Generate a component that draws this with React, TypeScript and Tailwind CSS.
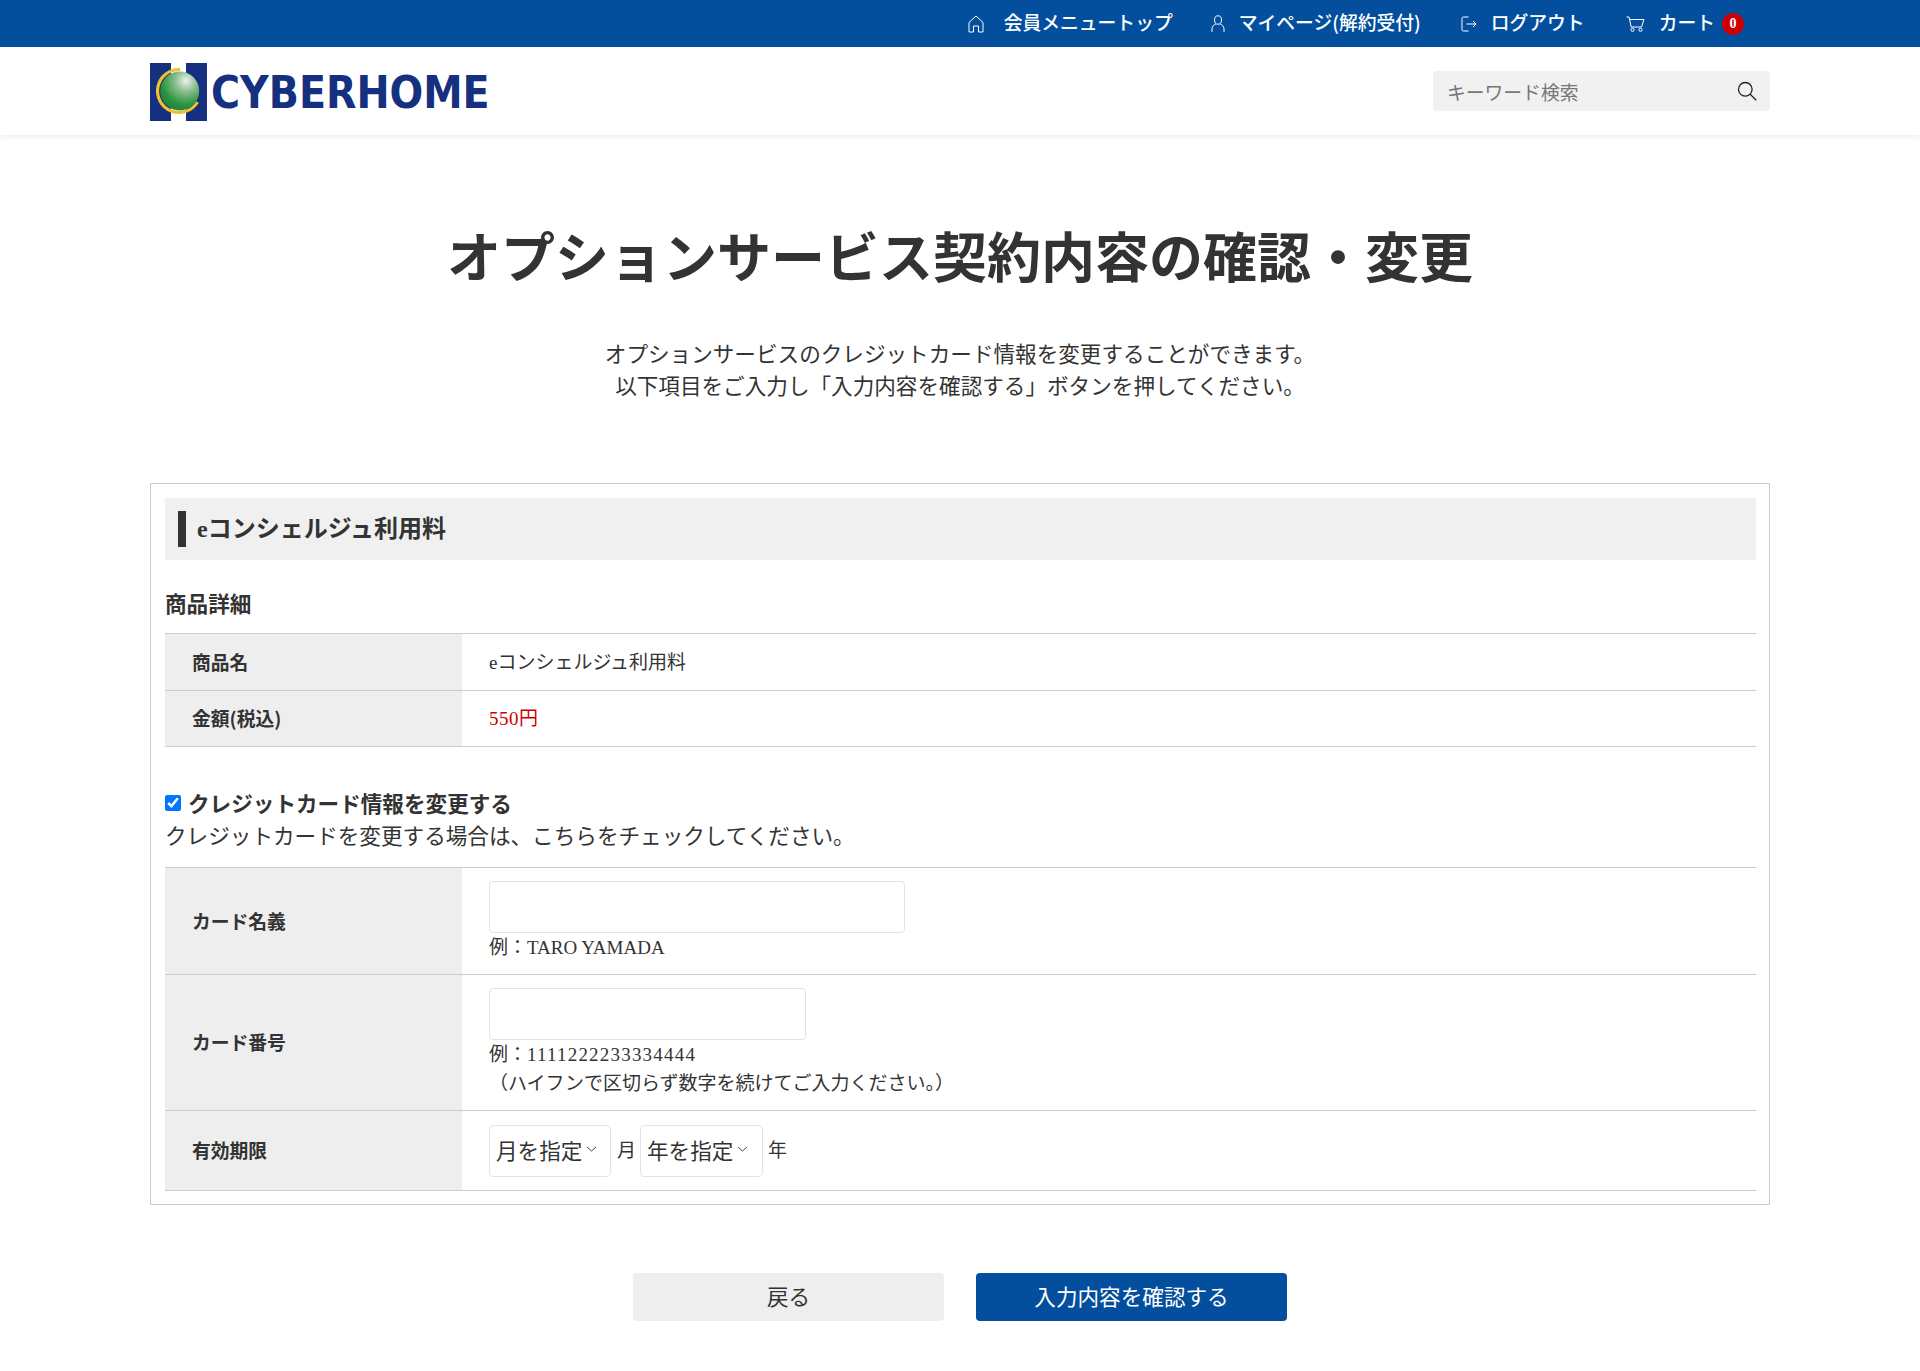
import React from "react";

const sans = "[font-family:'Noto_Sans_CJK_JP',sans-serif]";
const serif = "[font-family:'Liberation_Serif','Noto_Sans_CJK_JP',serif]";

function Logo() {
  return (
    <svg width="340" height="58" viewBox="0 0 340 58" className="block">
      <defs>
        <radialGradient id="ball" cx="0.66" cy="0.24" r="0.85">
          <stop offset="0" stopColor="#eef3ee" />
          <stop offset="0.32" stopColor="#8cc08f" />
          <stop offset="0.72" stopColor="#2b9440" />
          <stop offset="1" stopColor="#1d7d35" />
        </radialGradient>
      </defs>
      <rect x="0" y="0" width="21" height="58" fill="#14307f" />
      <rect x="36" y="0" width="21" height="58" fill="#14307f" />
      <path d="M 30 6.5 A 21.5 21.5 0 1 0 47.5 39" fill="none" stroke="#f2bf2f" strokeWidth="3.2" />
      <circle cx="29.7" cy="28" r="19.5" fill="url(#ball)" />
      <g transform="translate(61 45) scale(0.88 1)">
        <text x="0" y="0" fontFamily="'DejaVu Sans', sans-serif" fontWeight="700" fontSize="45" fill="#14307f">CYBERHOME</text>
      </g>
    </svg>
  );
}

function HomeIcon() {
  return (
    <svg width="16" height="18" viewBox="0 0 16 18" fill="none" stroke="currentColor" strokeWidth="1" className="shrink-0">
      <path d="M1 7.5 8 1l7 6.5V17h-4.5v-6h-5v6H1z" strokeLinejoin="round" />
    </svg>
  );
}
function UserIcon() {
  return (
    <svg width="14" height="17" viewBox="0 0 14 17" fill="none" stroke="currentColor" strokeWidth="1" className="shrink-0">
      <ellipse cx="7" cy="5" rx="3.5" ry="4.2" />
      <path d="M1 16.5V14c0-2.5 2-4.5 3.6-5M13 16.5V14c0-2.5-2-4.5-3.6-5" strokeLinecap="round" />
    </svg>
  );
}
function LogoutIcon() {
  return (
    <svg width="16" height="16" viewBox="0 0 16 16" fill="none" stroke="currentColor" strokeWidth="1" className="shrink-0">
      <path d="M7.5 1H2.5A1.5 1.5 0 0 0 1 2.5v11A1.5 1.5 0 0 0 2.5 15h5" />
      <path d="M5.5 8H15M12 5l3 3-3 3" strokeLinejoin="round" />
    </svg>
  );
}
function CartIcon() {
  return (
    <svg width="19" height="16" viewBox="0 0 19 16" fill="none" stroke="currentColor" strokeWidth="1" className="shrink-0">
      <path d="M.5 1H3l2.2 10h10.3L18 3.5H3.5" strokeLinejoin="round" />
      <circle cx="6.5" cy="13.8" r="1.6" />
      <circle cx="14.5" cy="13.8" r="1.6" />
    </svg>
  );
}
function SearchIcon() {
  return (
    <svg width="20" height="20" viewBox="0 0 20 20" fill="none" stroke="#222" strokeWidth="1.3" className="shrink-0">
      <circle cx="8.3" cy="8.3" r="6.8" />
      <path d="m13.2 13.2 6 6" />
    </svg>
  );
}
function Chevron() {
  return (
    <svg width="11" height="6" viewBox="0 0 11 6" fill="none" stroke="#444" strokeWidth="1" className="shrink-0 -mt-[3px]">
      <path d="m1 1 4.5 4L10 1" />
    </svg>
  );
}

function Row({ label, className, children }: { label: string; className: string; children: React.ReactNode }) {
  return (
    <div className={`flex border-b border-[#cccccc] ${className}`}>
      <div className={`w-[297px] shrink-0 bg-[#eeeeee] pl-[27px] flex items-center text-[18.8px] font-bold text-[#333] ${sans}`}>
        {label}
      </div>
      <div className="flex-1 pl-[27px] text-[19px] text-[#333]">{children}</div>
    </div>
  );
}

function SelectBox({ label, w }: { label: string; w: string }) {
  return (
    <div className={`h-[52px] ${w} border border-[#e3e3e3] rounded-[4px] flex items-center pl-[6px] gap-[4px] text-[21.6px] text-[#333]`}>
      <span>{label}</span>
      <Chevron />
    </div>
  );
}

export default function App() {
  return (
    <div className={`min-h-[1371px] bg-white text-[#333] ${sans}`}>
      <div className="h-[47px] bg-[#034f9e] text-white flex items-center justify-end pr-[176px] text-[18.8px] font-medium">
        <div className="flex items-center">
          <HomeIcon />
          <span className="ml-[20px] -mt-[2px]">会員メニュートップ</span>
        </div>
        <div className="flex items-center ml-[38px]">
          <UserIcon />
          <span className="ml-[14px] -mt-[2px]">マイページ(解約受付)</span>
        </div>
        <div className="flex items-center ml-[40px]">
          <LogoutIcon />
          <span className="ml-[14px] -mt-[2px]">ログアウト</span>
        </div>
        <div className="flex items-center ml-[41px]">
          <CartIcon />
          <span className="ml-[14px] -mt-[2px]">カート</span>
          <span className="ml-[7px] w-[22px] h-[22px] rounded-full bg-[#cc0000] text-[14px] font-bold flex items-center justify-center [font-family:'Liberation_Serif',serif]">0</span>
        </div>
      </div>

      <header className="h-[88px] bg-white shadow-[0_2px_6px_rgba(0,0,0,0.08)] flex items-center justify-between px-[150px]">
        <div className="pt-[2px]"><Logo /></div>
        <div className="w-[337px] h-[40px] bg-[#f1f1f1] rounded-[4px] flex items-center justify-between pl-[14px] pr-[13px] mt-[-1px]">
          <span className="text-[18.8px] text-[#777] pt-[4px]">キーワード検索</span>
          <SearchIcon />
        </div>
      </header>

      <main className="px-[150px]">
        <h1 className="mt-[80px] text-center text-[54px] leading-[80px] font-bold text-[#333]">オプションサービス契約内容の確認・変更</h1>
        <p className="mt-[42px] text-center text-[21.6px] leading-[32px] text-[#333]">
          オプションサービスのクレジットカード情報を変更することができます。<br />
          以下項目をご入力し「入力内容を確認する」ボタンを押してください。
        </p>

        <section className="mt-[82px] border border-[#cccccc] pl-[14px] pr-[13px] pt-[14px] h-[722px]">
          <h2 className={`h-[62px] bg-[#f0f0f0] flex items-center pl-[13px] text-[24px] font-bold text-[#333] ${serif}`}>
            <span className="w-[8px] h-[36px] bg-[#333] mr-[11px]" />
            eコンシェルジュ利用料
          </h2>
          <h3 className="mt-[27px] h-[32px] leading-[32px] text-[21.6px] font-bold text-[#333]">商品詳細</h3>
          <div className={`mt-[14px] border-t border-[#cccccc] ${serif}`}>
            <Row label="商品名" className="h-[57px]">
              <div className="h-full flex items-center pt-[2px]">eコンシェルジュ利用料</div>
            </Row>
            <Row label="金額(税込)" className="h-[56px]">
              <div className="h-full flex items-center pt-[2px] text-[#cc0000] tracking-[0.5px]">550円</div>
            </Row>
          </div>

          <label className="mt-[40px] h-[32px] flex items-center text-[21.6px] font-bold text-[#333]">
            <input type="checkbox" defaultChecked className="w-[16px] h-[16px] m-0 mr-[7px] accent-[#0075ff]" />
            クレジットカード情報を変更する
          </label>
          <p className="text-[21.6px] leading-[32px] text-[#333]">クレジットカードを変更する場合は、こちらをチェックしてください。</p>

          <div className={`mt-[16px] border-t border-[#cccccc] ${serif}`}>
            <Row label="カード名義" className="h-[107px]">
              <div className="pt-[13px]">
                <div className="w-[416px] h-[52px] border border-[#e3e3e3] rounded-[4px]" />
                <div className="mt-[1px] leading-[28px]">例：TARO YAMADA</div>
              </div>
            </Row>
            <Row label="カード番号" className="h-[136px]">
              <div className="pt-[13px]">
                <div className="w-[317px] h-[52px] border border-[#e3e3e3] rounded-[4px]" />
                <div className="mt-[1px] leading-[28px]">例：<span className="tracking-[1.2px]">1111222233334444</span></div>
                <div className="leading-[29px]">（ハイフンで区切らず数字を続けてご入力ください。）</div>
              </div>
            </Row>
            <Row label="有効期限" className="h-[80px]">
              <div className={`h-full flex items-center ${sans}`}>
                <SelectBox label="月を指定" w="w-[122px]" />
                <span className="ml-[6px] mr-[4px] -mt-[3px]">月</span>
                <SelectBox label="年を指定" w="w-[123px]" />
                <span className="ml-[5px] -mt-[3px]">年</span>
              </div>
            </Row>
          </div>
        </section>

        <div className="mt-[68px] flex justify-center gap-[32px]">
          <button className="w-[311px] h-[48px] pb-[1px] rounded-[4px] bg-[#eeeeee] text-[21.6px] text-[#333]">戻る</button>
          <button className="w-[311px] h-[48px] pb-[1px] rounded-[4px] bg-[#034f9e] text-[21.6px] text-white">入力内容を確認する</button>
        </div>
      </main>
    </div>
  );
}
